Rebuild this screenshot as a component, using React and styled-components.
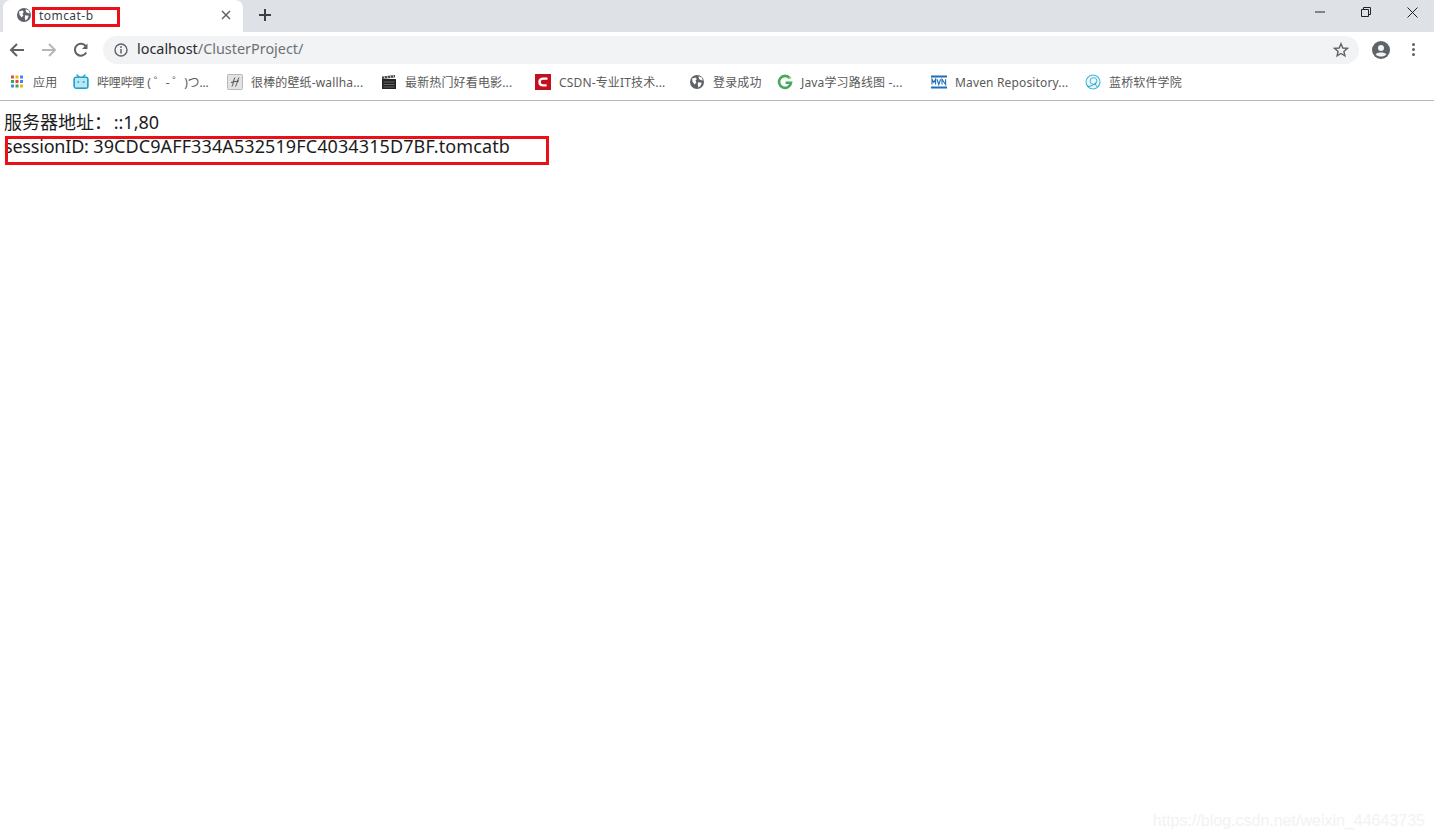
import React from "react";
import styled, { createGlobalStyle } from "styled-components";

const Global = createGlobalStyle`
  html, body { margin: 0; padding: 0; background: #fff; }
  body { font-family: "Noto Sans", "Noto Sans CJK SC", sans-serif; overflow: hidden; }
`;
const Page = styled.div`
  position: relative;
  width: 1434px;
  height: 838px;
  background: #fff;
  overflow: hidden;
`;
const TabStrip = styled.div`
  height: 32px;
  background: #dee1e6;
  display: flex;
  align-items: flex-end;
  padding-left: 3px;
`;
const Tab = styled.div`
  width: 240px;
  height: 32px;
  background: #fff;
  border-radius: 8px 8px 0 0;
  display: flex;
  align-items: center;
  padding: 0 12px 2px 13px;
  box-sizing: border-box;
  position: relative;
`;
const TabTitle = styled.span`
  flex: 1;
  margin-left: 7px;
  font-size: 12px;
  color: #3c4043;
  letter-spacing: 0.45px;
`;
const NewTab = styled.div`
  margin-left: 14px;
  width: 16px;
  height: 16px;
  margin-bottom: 9px;
  display: flex;
  color: #3c4043;
`;
const WindowControls = styled.div`
  margin-left: auto;
  margin-right: -1px;
  display: flex;
  align-self: flex-start;
  color: #222;
`;
const WinBtn = styled.div`
  width: 46px;
  height: 24px;
  display: flex;
  align-items: center;
  justify-content: center;
`;
const Toolbar = styled.div`
  height: 35px;
  display: flex;
  align-items: center;
  padding-left: 9px;
`;
const NavBtn = styled.div`
  width: 16px;
  height: 16px;
  margin-right: 16px;
  display: flex;
  color: ${(p) => p.$color || "#5f6368"};
`;
const Omnibox = styled.div`
  width: 1256px;
  height: 28px;
  margin-left: -2px;
  border-radius: 14px;
  background: #f1f3f4;
  display: flex;
  align-items: center;
  padding: 0 10px 0 11px;
  box-sizing: border-box;
`;
const Url = styled.div`
  flex: 1;
  margin-left: 9px;
  padding-bottom: 2px;
  font-size: 14.4px;
  color: #2a2b2e;
`;
const UrlPath = styled.span`
  color: #6d7175;
`;
const ProfileSlot = styled.div`
  margin-left: 13px;
  width: 18px;
  height: 18px;
  display: flex;
`;
const MenuSlot = styled.div`
  margin-left: 22px;
  width: 4px;
  display: flex;
  flex-direction: column;
  gap: 2px;
`;
const Dot = styled.span`
  width: 3px;
  height: 3px;
  border-radius: 50%;
  background: #5f6368;
`;
const Bookmarks = styled.div`
  height: 34px;
  border-bottom: 1px solid #b8b8b8;
  display: flex;
  align-items: center;
  box-sizing: border-box;
  padding: 0 0 3px 9px;
`;
const Bookmark = styled.div`
  width: ${(p) => p.$w}px;
  flex: none;
  display: flex;
  align-items: center;
  gap: 8px;
  font-size: 12px;
  letter-spacing: ${(p) => p.$ls ?? 0.15}px;
  color: #5a5a5a;
  white-space: nowrap;
`;
const Fav = styled.svg`
  width: 16px;
  height: 16px;
  flex: none;
`;
const Content = styled.div`
  padding: 9px 0 0 4px;
  font-size: 18px;
  color: #1c1c1c;
`;
const Line = styled.div`
  height: 24px;
  line-height: 24px;
  white-space: nowrap;
`;
const Addr = styled.span`
  margin-left: -3px;
`;
const SessionKey = styled.span`
  letter-spacing: -0.2px;
`;
const SessionValue = styled.span`
  letter-spacing: 0.1px;
`;
const Mark = styled.div`
  position: absolute;
  border: 3px solid #ec0f17;
  box-sizing: border-box;
`;
const TabMark = styled(Mark)`
  left: 32px;
  top: 7px;
  width: 88px;
  height: 20px;
`;
const SessionMark = styled(Mark)`
  left: 5px;
  top: 136px;
  width: 544px;
  height: 29px;
`;
const Watermark = styled.div`
  position: absolute;
  right: 9px;
  bottom: 8px;
  font: 16px "Liberation Sans", sans-serif;
  color: #f2f2f2;
`;

const Globe = () => (
  <Fav viewBox="0 0 16 16">
    <circle cx="8" cy="8" r="7" fill="#5f6368" />
    <path d="M3 4.500 6.500 3.600 7.800 5 6.500 6.800 7.400 8.600 5.600 10.600 3.500 7.800ZM9.500 2.200 12.800 3.600 13.800 6.500 11.800 6 10 5ZM9 8.200 12.800 8.800 11.400 12 9.400 13.400 8.800 11Z" fill="#fff" />
  </Fav>
);

const Bili = () => (
  <Fav viewBox="0 0 16 16">
    <path d="M4 1 6 3M12 1 10 3" stroke="#1ea4d0" strokeWidth="1.4" strokeLinecap="round" />
    <rect x="1.200" y="3.400" width="13.600" height="10.600" rx="2" fill="none" stroke="#1ea4d0" strokeWidth="1.8" />
    <rect x="2" y="4.400" width="12" height="9" fill="#bde6f3" />
    <path d="M4.400 8h1.800M9.800 8h1.800" stroke="#1ea4d0" strokeWidth="1.6" />
  </Fav>
);

const Apps = () => (
  <Fav viewBox="0 0 16 16">
    {["#e8453c", "#f4b400", "#4285f4", "#34a853", "#e8453c", "#4285f4", "#4285f4", "#34a853", "#f4b400"].map((c, i) => (
      <rect key={i} x={2 + (i % 3) * 4.5} y={1.5 + Math.floor(i / 3) * 4.5} width="3" height="3" fill={c} />
    ))}
  </Fav>
);

const HIcon = () => (
  <Fav viewBox="0 0 16 16">
    <rect x="0.5" y="0.5" width="15" height="15" rx="1" fill="#e2e2e2" stroke="#b8b8b8" />
    <path d="M5 12.500C6.500 10 6.500 5 8 3.500M8.500 12.500C10 10 10.500 6 12 3.500M4 8.500C7 7.500 9 7.500 12 7" fill="none" stroke="#444" strokeWidth="0.9" />
  </Fav>
);

const Clapper = () => (
  <Fav viewBox="0 0 16 16">
    <rect x="1" y="5" width="14" height="10" fill="#222" />
    <path d="M1 2.500 14 1v2.600L1 5Z" fill="#444" />
    <path d="M3 2.200 4 4.700M6 1.900 7 4.400M9 1.600 10 4.100M12 1.300 13 3.800" stroke="#ddd" strokeWidth="0.9" />
    <path d="M2.500 8h11M2.500 10.500h11M2.500 13h11" stroke="#777" strokeWidth="0.8" />
  </Fav>
);

const Csdn = () => (
  <Fav viewBox="0 0 16 16">
    <rect width="16" height="16" fill="#c40f1c" />
    <path d="M12.500 4.600H8.200C6 4.600 4.500 6.100 4.500 8s1.500 3.400 3.700 3.400h3.400" fill="none" stroke="#fff" strokeWidth="2.4" />
  </Fav>
);

const GIcon = () => (
  <Fav viewBox="0 0 16 16">
    <path d="M12.800 4.200A6 6 0 1 0 14 8.800H8.600" fill="none" stroke="#46a85a" strokeWidth="2.6" />
    <circle cx="13" cy="3.600" r="1.200" fill="#8ccf6a" />
  </Fav>
);

const Mvn = () => (
  <Fav viewBox="0 0 16 16">
    <rect y="1.500" width="16" height="2" fill="#1f6fb8" />
    <rect y="12.500" width="16" height="2" fill="#1f6fb8" />
    <path d="M1 10.500V5.200L2.800 8.400 4.600 5.200V10.500M6 5.200 7.800 10.500 9.600 5.200M11 10.500V5.200L14.600 10.500V5.200" fill="none" stroke="#1f6fb8" strokeWidth="1.1" />
  </Fav>
);

const Lanqiao = () => (
  <Fav viewBox="0 0 16 16">
    <circle cx="8" cy="8" r="7" fill="#eaf7fb" stroke="#44b6d8" strokeWidth="1.1" />
    <circle cx="8.500" cy="7" r="3.400" fill="none" stroke="#44b6d8" strokeWidth="1" />
    <path d="M2.500 12.500C6 12.500 9 11 11 8.500M10 10l2.400 3" fill="none" stroke="#2f9fc4" strokeWidth="1" />
  </Fav>
);

const items = [
  { w: 64, icon: <Apps />, label: "应用" },
  { w: 154, icon: <Bili />, label: "哔哩哔哩 ( ゜- ゜)つ...", ls: -0.15 },
  { w: 154, icon: <HIcon />, label: "很棒的壁纸-wallha..." },
  { w: 154, icon: <Clapper />, label: "最新热门好看电影..." },
  { w: 154, icon: <Csdn />, label: "CSDN-专业IT技术..." },
  { w: 88, icon: <Globe />, label: "登录成功" },
  { w: 154, icon: <GIcon />, label: "Java学习路线图 -..." },
  { w: 154, icon: <Mvn />, label: "Maven Repository..." },
  { w: 110, icon: <Lanqiao />, label: "蓝桥软件学院" },
];

export default function App() {
  return (
    <Page>
      <Global />
      <TabStrip>
        <Tab>
          <Globe />
          <TabTitle>tomcat-b</TabTitle>
          <svg width="10" height="10" viewBox="0 0 10 10">
            <path d="M1 1l8 8M9 1l-8 8" stroke="#5f6368" strokeWidth="1.5" />
          </svg>
        </Tab>
        <NewTab>
          <svg width="16" height="16" viewBox="0 0 16 16">
            <path d="M8 2v12M2 8h12" stroke="currentColor" strokeWidth="2" />
          </svg>
        </NewTab>
        <WindowControls>
          <WinBtn>
            <svg width="10" height="10" viewBox="0 0 10 10">
              <path d="M0 5h10" stroke="currentColor" strokeWidth="1" />
            </svg>
          </WinBtn>
          <WinBtn>
            <svg width="10" height="10" viewBox="0 0 10 10">
              <path d="M2.500 2.500V.5h7v7h-2M.5 2.500h7v7h-7Z" fill="none" stroke="currentColor" strokeWidth="1" />
            </svg>
          </WinBtn>
          <WinBtn>
            <svg width="11" height="11" viewBox="0 0 11 11">
              <path d="M.5.5l10 10M10.500.5l-10 10" stroke="currentColor" strokeWidth="1" />
            </svg>
          </WinBtn>
        </WindowControls>
      </TabStrip>
      <Toolbar>
        <NavBtn>
          <svg width="16" height="16" viewBox="0 0 16 16">
            <path d="M15 8H2.500M8 2 2 8l6 6" fill="none" stroke="currentColor" strokeWidth="2" />
          </svg>
        </NavBtn>
        <NavBtn $color="#b5b7ba">
          <svg width="16" height="16" viewBox="0 0 16 16">
            <path d="M1 8h12.500M8 2l6 6-6 6" fill="none" stroke="currentColor" strokeWidth="2" />
          </svg>
        </NavBtn>
        <NavBtn>
          <svg width="16" height="16" viewBox="0 0 16 16">
            <path d="M13.200 10.500A6 6 0 1 1 13 4.500" fill="none" stroke="currentColor" strokeWidth="2" />
            <path d="M14.500 1.500v5.500H9Z" fill="currentColor" />
          </svg>
        </NavBtn>
        <Omnibox>
          <svg width="14" height="14" viewBox="0 0 14 14">
            <circle cx="7" cy="7" r="6" fill="none" stroke="#5f6368" strokeWidth="1.4" />
            <path d="M7 6v4.400" stroke="#5f6368" strokeWidth="1.5" />
            <circle cx="7" cy="4" r="0.95" fill="#5f6368" />
          </svg>
          <Url>localhost<UrlPath>/ClusterProject/</UrlPath></Url>
          <svg width="16" height="16" viewBox="0 0 16 16">
            <path d="M8 1.800 9.800 6l4.600.4-3.500 3 1 4.500L8 11.500 4.100 13.900l1-4.500-3.500-3L6.200 6Z" fill="none" stroke="#5f6368" strokeWidth="1.4" />
          </svg>
        </Omnibox>
        <ProfileSlot>
          <svg width="18" height="18" viewBox="0 0 18 18">
            <circle cx="9" cy="9" r="9" fill="#5f6368" />
            <circle cx="9" cy="7" r="3" fill="#f1f3f4" />
            <path d="M3.600 13.200C5 10.800 13 10.800 14.400 13.200 13 15 11 15.600 9 15.600S5 15 3.600 13.200Z" fill="#f1f3f4" />
          </svg>
        </ProfileSlot>
        <MenuSlot>
          <Dot />
          <Dot />
          <Dot />
        </MenuSlot>
      </Toolbar>
      <Bookmarks>
        {items.map((b) => (
          <Bookmark key={b.label} $w={b.w} $ls={b.ls}>
            {b.icon}
            <span>{b.label}</span>
          </Bookmark>
        ))}
      </Bookmarks>
      <Content>
        <Line>服务器地址： <Addr>::1,80</Addr></Line>
        <Line>
          <SessionKey>sessionID: </SessionKey>
          <SessionValue>39CDC9AFF334A532519FC4034315D7BF.tomcatb</SessionValue>
        </Line>
      </Content>
      <TabMark />
      <SessionMark />
      <Watermark>https://blog.csdn.net/weixin_44643735</Watermark>
    </Page>
  );
}
